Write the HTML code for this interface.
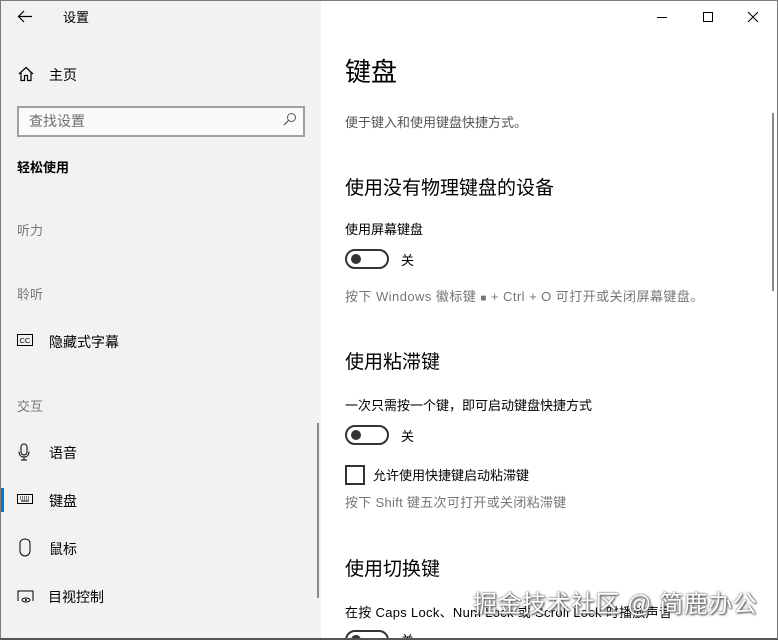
<!DOCTYPE html>
<html style="width:778px;height:640px;overflow:hidden"><head><meta charset="utf-8"><style>
*{margin:0;padding:0;box-sizing:border-box}
body{width:778px;height:640px;overflow:hidden;background:#fff;font-family:"Liberation Sans","Noto Sans CJK SC",sans-serif;color:#000;position:relative}
.a{position:absolute;white-space:nowrap;line-height:1}
#frame{position:absolute;left:0;top:0;width:778px;height:640px;border:1px solid #7a7a7a;border-bottom:2px solid #555;pointer-events:none}
#left{position:absolute;left:0;top:0;width:321px;height:640px;background:#f2f2f2}
.s13{font-size:13px}.s14{font-size:14px}
.g{color:#767676}
.h{font-size:19px}
.tg{position:absolute;width:44px;height:20px;border:2px solid #333;border-radius:10px}
.tg::after{content:"";position:absolute;left:4px;top:3px;width:10px;height:10px;border-radius:50%;background:#333}
</style></head><body>
<div id="left"></div>
<svg class="a" style="left:17px;top:10px" width="16" height="13" viewBox="0 0 16 13"><path d="M15 6.5H1.5M7 1L1.5 6.5L7 12" stroke="#000" stroke-width="1.2" fill="none"/></svg>
<div class="a s13" style="left:63px;top:11px">设置</div>
<svg class="a" style="left:18px;top:66px" width="16" height="16" viewBox="0 0 16 16"><path d="M1 8L8 1.5L15 8M3 6.5V14.5H6.5V9.5H9.5V14.5H13V6.5" stroke="#000" stroke-width="1.2" fill="none"/></svg>
<div class="a s14" style="left:49px;top:68px">主页</div>
<div class="a" style="left:17px;top:106px;width:288px;height:31px;border:2px solid #a0a0a0;background:#fafafa"></div>
<div class="a s14" style="left:29px;top:114px;color:#6e6e6e">查找设置</div>
<svg class="a" style="left:283px;top:112px" width="14" height="14" viewBox="0 0 14 14"><circle cx="8.5" cy="5.5" r="4" stroke="#555" stroke-width="1" fill="none"/><path d="M5.5 8.5L1 13" stroke="#555" stroke-width="1.2"/></svg>
<div class="a s13" style="left:17px;top:161px;font-weight:bold">轻松使用</div>
<div class="a s13 g" style="left:17px;top:224px">听力</div>
<div class="a s13 g" style="left:17px;top:288px">聆听</div>
<svg class="a" style="left:17px;top:334px" width="16" height="12" viewBox="0 0 16 12"><rect x="0.5" y="0.5" width="15" height="11" stroke="#000" fill="none"/><text x="2.5" y="9" font-size="7.5" font-family="Liberation Sans" >CC</text></svg>
<div class="a s14" style="left:49px;top:335px">隐藏式字幕</div>
<div class="a s13 g" style="left:17px;top:400px">交互</div>
<svg class="a" style="left:18px;top:443px" width="12" height="18" viewBox="0 0 12 18"><rect x="3" y="1" width="6" height="11" rx="3" stroke="#000" fill="none"/><path d="M1 8.5C1 12 3 14 6 14C9 14 11 12 11 8.5M6 14V17M3 17H9" stroke="#000" fill="none"/></svg>
<div class="a s14" style="left:49px;top:446px">语音</div>
<div class="a" style="left:0;top:488px;width:4px;height:24px;background:#0078d7"></div>
<svg class="a" style="left:17px;top:494px" width="16" height="10" viewBox="0 0 16 10"><rect x="0.5" y="0.5" width="15" height="9" stroke="#000" fill="none"/><path d="M3 3h1M5 3h1M7 3h1M9 3h1M11 3h1M3 5h1M5 5h1M7 5h1M9 5h1M11 5h1M4 7h8" stroke="#000"/></svg>
<div class="a s14" style="left:49px;top:494px">键盘</div>
<svg class="a" style="left:19px;top:538px" width="12" height="19" viewBox="0 0 12 19"><path d="M1 5A5 4 0 0 1 11 5V13A5 5 0 0 1 1 13Z" stroke="#000" fill="none"/></svg>
<div class="a s14" style="left:49px;top:542px">鼠标</div>
<svg class="a" style="left:17px;top:590px" width="17" height="13" viewBox="0 0 17 13"><path d="M1 11V1H16V11" stroke="#000" fill="none"/><ellipse cx="9" cy="10" rx="4" ry="2" stroke="#000" fill="none"/><circle cx="9" cy="10" r="1" fill="#000"/></svg>
<div class="a s14" style="left:48px;top:590px">目视控制</div>
<div class="a" style="left:317px;top:423px;width:2px;height:175px;background:#888"></div>

<svg class="a" style="left:656px;top:11px" width="104" height="12" viewBox="0 0 104 12"><path d="M1 6.5H11" stroke="#000"/><rect x="47.5" y="1.5" width="9" height="9" stroke="#000" fill="none"/><path d="M92 1L102 11M102 1L92 11" stroke="#000"/></svg>
<div class="a" style="left:345px;top:59px;font-size:26px">键盘</div>
<div class="a s13" style="left:345px;top:116px;color:#555">便于键入和使用键盘快捷方式。</div>
<div class="a h" style="left:345px;top:179px">使用没有物理键盘的设备</div>
<div class="a s13" style="left:345px;top:223px">使用屏幕键盘</div>
<div class="tg" style="left:345px;top:249px"></div>
<div class="a s13" style="left:401px;top:254px">关</div>
<div class="a s13 g" style="left:345px;top:290px;letter-spacing:0.45px">按下 Windows 徽标键 <span style="font-size:10px">■</span> + Ctrl + O 可打开或关闭屏幕键盘。</div>
<div class="a h" style="left:345px;top:353px">使用粘滞键</div>
<div class="a s13" style="left:345px;top:399px">一次只需按一个键，即可启动键盘快捷方式</div>
<div class="tg" style="left:345px;top:425px"></div>
<div class="a s13" style="left:401px;top:430px">关</div>
<div class="a" style="left:345px;top:465px;width:20px;height:20px;border:2px solid #333"></div>
<div class="a s13" style="left:373px;top:469px">允许使用快捷键启动粘滞键</div>
<div class="a s13 g" style="left:345px;top:496px;letter-spacing:0.3px">按下 Shift 键五次可打开或关闭粘滞键</div>
<div class="a h" style="left:345px;top:560px">使用切换键</div>
<div class="a s13" style="left:345px;top:606px;letter-spacing:0.3px">在按 Caps Lock、Num Lock 或 Scroll Lock 时播放声音</div>
<div class="tg" style="left:345px;top:630px"></div>
<div class="a s13" style="left:401px;top:634px">关</div>
<div class="a" style="left:473px;top:593px;font-size:24px;color:#fff;text-shadow:0 0 2px #555,1px 1px 2px #444;letter-spacing:0.5px">掘金技术社区 @ 简鹿办公</div>
<div class="a" style="left:772px;top:113px;width:2px;height:178px;background:#888"></div>
<div id="frame"></div>
</body></html>
